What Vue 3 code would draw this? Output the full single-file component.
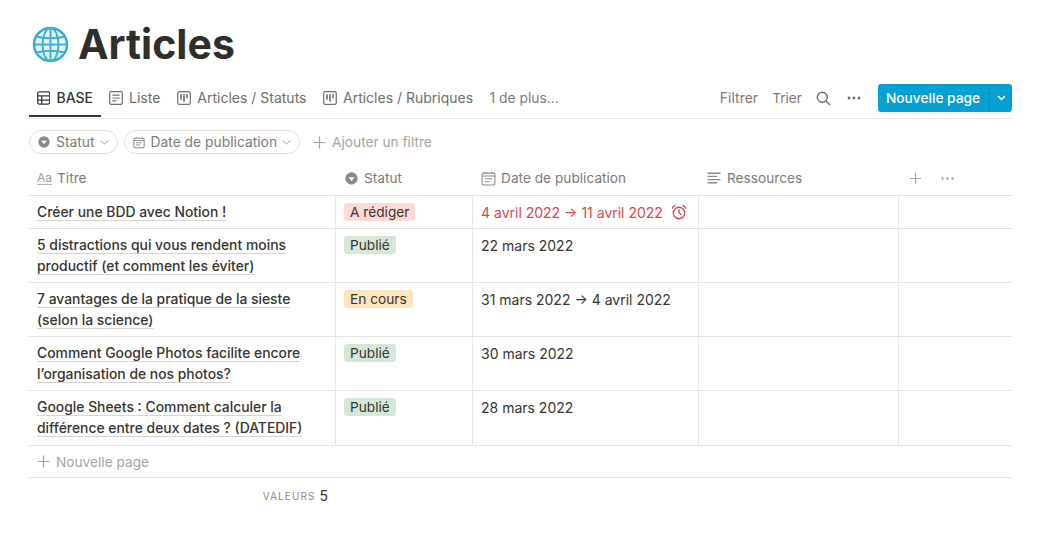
<script setup>
const rows = [
  { lines: ['Créer une BDD avec Notion !'], status: 'A rédiger', tone: 'red', date: '4 avril 2022 → 11 avril 2022', late: true },
  { lines: ['5 distractions qui vous rendent moins', 'productif (et comment les éviter)'], status: 'Publié', tone: 'green', date: '22 mars 2022' },
  { lines: ['7 avantages de la pratique de la sieste', '(selon la science)'], status: 'En cours', tone: 'yellow', date: '31 mars 2022 → 4 avril 2022' },
  { lines: ['Comment Google Photos facilite encore', 'l’organisation de nos photos?'], status: 'Publié', tone: 'green', date: '30 mars 2022' },
  { lines: ['Google Sheets : Comment calculer la', 'différence entre deux dates ? (DATEDIF)'], status: 'Publié', tone: 'green', date: '28 mars 2022' },
]
</script>

<template>
  <div class="page">
    <h1 class="title">
      <svg class="globe" width="37" height="37" viewBox="0 0 37 37" fill="none">
        <circle cx="18.5" cy="18.5" r="16.5" fill="#e6f4f9" stroke="#35a9d3" stroke-width="2.4" />
        <g stroke="#3fb0d8" stroke-width="2">
          <ellipse cx="18.5" cy="18.5" rx="8" ry="16.5" />
          <path d="M18.5 2v33M2 18.5h33M4.5 10.5c8 2.4 20 2.4 28 0M4.5 26.5c8-2.4 20-2.4 28 0" />
        </g>
      </svg>
      <span>Articles</span>
    </h1>

    <div class="tabs">
      <div class="tab active">
        <svg width="14" height="14" viewBox="0 0 14 14" fill="none" stroke="#37352f" stroke-width="1.3">
          <rect x=".7" y=".7" width="12.6" height="12.6" rx="1.8" />
          <path d="M.7 4.9h12.6M.7 9.1h12.6M4.9 4.9v8.4" />
        </svg>
        <span>BASE</span>
      </div>
      <div class="tab">
        <svg width="14" height="14" viewBox="0 0 14 14" fill="none" stroke="#6f6e69" stroke-width="1.2">
          <rect x=".7" y=".7" width="12.6" height="12.6" rx="1.6" />
          <path d="M3.4 4.2h7.2M3.4 7h7.2M3.4 9.8h4" />
        </svg>
        <span>Liste</span>
      </div>
      <div class="tab">
        <svg width="14" height="14" viewBox="0 0 14 14" fill="none" stroke="#6f6e69" stroke-width="1.2">
          <rect x=".7" y=".7" width="12.6" height="12.6" rx="1.6" />
          <path d="M4 3.2v5.6M7 3.2v7.6M10 3.2v4" stroke-width="1.6" />
        </svg>
        <span>Articles / Statuts</span>
      </div>
      <div class="tab">
        <svg width="14" height="14" viewBox="0 0 14 14" fill="none" stroke="#6f6e69" stroke-width="1.2">
          <rect x=".7" y=".7" width="12.6" height="12.6" rx="1.6" />
          <path d="M4 3.2v5.6M7 3.2v7.6M10 3.2v4" stroke-width="1.6" />
        </svg>
        <span>Articles / Rubriques</span>
      </div>
      <div class="tab more">1 de plus...</div>

      <div class="actions">
        <span class="action filter">Filtrer</span>
        <span class="action">Trier</span>
        <svg class="search" width="15" height="15" viewBox="0 0 15 15" fill="none" stroke="#6f6e69" stroke-width="1.4">
          <circle cx="6.3" cy="6.3" r="5" />
          <path d="M10 10l4 4" />
        </svg>
        <svg class="dots" width="14" height="4" viewBox="0 0 14 4" fill="#6f6e69">
          <circle cx="2" cy="2" r="1.4" /><circle cx="7" cy="2" r="1.4" /><circle cx="12" cy="2" r="1.4" />
        </svg>
        <div class="new">
          <span class="new-label">Nouvelle page</span>
          <span class="new-arrow">
            <svg width="9" height="6" viewBox="0 0 9 6" fill="none" stroke="#fff" stroke-width="1.5"><path d="M1 1l3.5 3.5L8 1" /></svg>
          </span>
        </div>
      </div>
    </div>

    <div class="filters">
      <div class="pill">
        <svg width="12" height="12" viewBox="0 0 14 14"><circle cx="7" cy="7" r="6.6" fill="#8b8a86" /><path d="M3.8 5.6h6.4L7 9.6z" fill="#fff" /></svg>
        <span>Statut</span>
        <svg class="caret" width="9" height="5" viewBox="0 0 9 5" fill="none" stroke="#a5a4a0" stroke-width="1"><path d="M.6.7L4.5 4 8.4.7" /></svg>
      </div>
      <div class="pill">
        <svg width="12" height="13" viewBox="0 0 14 14" fill="none" stroke="#8b8a86" stroke-width="1.2">
          <rect x="1" y="2" width="12" height="11" rx="1.4" />
          <path d="M1 4.6h12M3.6.8v1.6M10.4.8v1.6M3.6 7.2h6.8M3.6 10h4.4" />
        </svg>
        <span>Date de publication</span>
        <svg class="caret" width="9" height="5" viewBox="0 0 9 5" fill="none" stroke="#a5a4a0" stroke-width="1"><path d="M.6.7L4.5 4 8.4.7" /></svg>
      </div>
      <div class="add-filter">
        <svg width="13" height="13" viewBox="0 0 13 13" stroke="#a5a4a0" stroke-width="1.2"><path d="M6.5.5v12M.5 6.5h12" /></svg>
        <span>Ajouter un filtre</span>
      </div>
    </div>

    <div class="table">
      <div class="head row-grid">
        <div class="hcell">
          <span class="aa">Aa</span>
          <span>Titre</span>
        </div>
        <div class="hcell">
          <svg class="status-icon" width="13" height="13" viewBox="0 0 14 14"><circle cx="7" cy="7" r="6.6" fill="#8b8a86" /><path d="M3.8 5.6h6.4L7 9.6z" fill="#fff" /></svg>
          <span>Statut</span>
        </div>
        <div class="hcell">
          <svg width="15" height="15" viewBox="0 0 14 14" fill="none" stroke="#8b8a86" stroke-width="1">
            <rect x="1" y="2" width="12" height="11" rx="1.4" />
            <path d="M1 4.6h12M3.6.8v1.6M10.4.8v1.6M3.6 7.2h6.8M3.6 10h4.4" />
          </svg>
          <span class="date-label">Date de publication</span>
        </div>
        <div class="hcell">
          <svg width="14" height="12" viewBox="0 0 14 12" stroke="#8b8a86" stroke-width="1.4"><path d="M.5 1.2h13M.5 4.4h9.5M.5 7.6h13M.5 10.8h9.5" /></svg>
          <span>Ressources</span>
        </div>
        <div class="hcell tools">
          <svg width="11" height="11" viewBox="0 0 11 11" stroke="#a5a4a0" stroke-width="1.1"><path d="M5.5 0v11M0 5.5h11" /></svg>
          <svg width="13" height="3" viewBox="0 0 13 3" fill="#a5a4a0"><circle cx="1.5" cy="1.5" r="1.2" /><circle cx="6.5" cy="1.5" r="1.2" /><circle cx="11.5" cy="1.5" r="1.2" /></svg>
        </div>
      </div>

      <div v-for="(row, i) in rows" :key="i" class="row row-grid">
        <div class="cell name">
          <span v-for="line in row.lines" :key="line" class="line"><span class="u">{{ line }}</span></span>
        </div>
        <div class="cell status"><span class="tag" :class="row.tone">{{ row.status }}</span></div>
        <div class="cell date" :class="{ late: row.late }">
          <span>{{ row.date }}</span>
          <svg v-if="row.late" width="16" height="16" viewBox="0 0 16 16" fill="none" stroke="#dc4450" stroke-width="1.4">
            <circle cx="8" cy="9" r="5.7" />
            <path d="M8 5.6V9l2.4 1.6M1.2 4.6C1.6 3 2.8 1.8 4.4 1.4M14.8 4.6C14.4 3 13.2 1.8 11.6 1.4" />
          </svg>
        </div>
        <div class="cell"></div>
        <div class="cell last"></div>
      </div>
    </div>

    <div class="new-row">
      <svg width="13" height="13" viewBox="0 0 13 13" stroke="#a5a4a0" stroke-width="1.2"><path d="M6.5.5v12M.5 6.5h12" /></svg>
      <span>Nouvelle page</span>
    </div>

    <div class="footer">
      <span class="count-label">VALEURS</span>
      <span class="count">5</span>
    </div>
  </div>
</template>

<style>
html, body { background: #fff; }
</style>

<style scoped>
.page {
  width: 983px;
  margin-left: 29px;
  font-family: Inter, "Liberation Sans", sans-serif;
  color: #37352f;
  font-size: 13.7px;
}
.title {
  display: flex;
  align-items: center;
  gap: 9px;
  margin: 0;
  height: 84px;
  padding: 4px 0 0 3px;
  box-sizing: border-box;
  font-size: 41px;
  line-height: 48px;
  font-weight: 700;
  color: #2f2e2b;
}
.tabs {
  display: flex;
  align-items: flex-start;
  height: 34px;
  border-bottom: 1px solid #e3e2e0;
}
.tab {
  display: flex;
  align-items: center;
  gap: 6px;
  height: 28px;
  line-height: 28px;
  padding: 0 8px;
  color: #6f6e69;
  font-size: 14px;
  white-space: nowrap;
}
.tab:nth-child(2) { padding-right: 9px; }
.tab:nth-child(3) { padding-right: 8.5px; }
.tab:nth-child(4) { padding-right: 8.5px; }
.tab.active {
  color: #37352f;
  font-weight: 500;
  height: 33px;
  width: 72px;
  box-sizing: border-box;
  align-items: flex-start;
  border-bottom: 2px solid #37352f;
}
.tab.active svg { margin-top: 7px; }
.tab.more { color: #7d7c78; font-size: 13.8px; }
.actions {
  margin-left: auto;
  display: flex;
  align-items: center;
  height: 28px;
  line-height: 28px;
}
.action { color: #7d7c78; }
.filter { margin-right: 14px; font-size: 14px; }
.search { margin-left: 14px; }
.dots { margin-left: 16px; }
.new {
  display: flex;
  align-items: stretch;
  height: 28px;
  margin-left: 17px;
  background: #06a0d4;
  border-radius: 3px;
  color: #fff;
  font-weight: 500;
}
.new-label {
  display: flex;
  align-items: center;
  width: 111px;
  box-sizing: border-box;
  padding: 0 8px;
  white-space: nowrap;
}
.new-arrow {
  display: flex;
  align-items: center;
  justify-content: center;
  width: 23px;
  box-sizing: border-box;
  border-left: 1px solid #0b8fbd;
}
.filters {
  display: flex;
  align-items: center;
  gap: 6px;
  height: 42px;
  padding-top: 4px;
  box-sizing: border-box;
}
.pill {
  display: flex;
  align-items: center;
  gap: 6px;
  height: 24px;
  padding: 0 8px;
  box-sizing: border-box;
  border: 1px solid #e0dfdc;
  border-radius: 12px;
  font-size: 13.85px;
  color: #7d7c78;
}
.caret { margin-left: -1px; }
.add-filter {
  display: flex;
  align-items: center;
  gap: 6px;
  margin-left: 7px;
  color: #a5a4a0;
}
.row-grid {
  display: grid;
  grid-template-columns: 307px 137px 226px 200px 113px;
}
.head {
  height: 35px;
  box-sizing: border-box;
  border-bottom: 1px solid #e3e2e0;
}
.hcell {
  display: flex;
  align-items: center;
  gap: 6px;
  padding: 0 8px;
  color: #7d7c78;
}
.aa {
  font-size: 12px;
  line-height: 13px;
  margin-right: -1px;
  color: #9b9a97;
  border-bottom: 1px solid #b5b4b0;
}
.status-icon { margin-left: 1px; }
.date-label { margin-left: -1px; }
.tools {
  gap: 20px;
  padding-left: 11px;
}
.row { border-bottom: 1px solid #e3e2e0; }
.cell {
  padding: 6px 8px 5px;
  border-right: 1px solid #e9e8e6;
  line-height: 21px;
  min-height: 21px;
}
.row:nth-child(2) .cell { padding-bottom: 4px; }
.row:last-child .name { padding-bottom: 6px; }
.cell.last { border-right: 0; }
.name {
  font-weight: 500;
  font-size: 13.9px;
  white-space: nowrap;
}
.line { display: block; height: 21px; }
.u {
  text-decoration: underline;
  text-decoration-color: #d5d4d1;
  text-decoration-thickness: 1px;
  text-underline-offset: 3px;
  text-decoration-skip-ink: none;
}
.status { padding-top: 7px; }
.tag {
  display: block;
  width: max-content;
  height: 18px;
  line-height: 18px;
  padding: 0 6px;
  border-radius: 3px;
  color: #37352f;
}
.red { background: #ffd9d5; }
.green { background: #d5e8d8; }
.yellow { background: #fde4bd; }
.date {
  display: flex;
  align-items: flex-start;
  gap: 6px;
  font-size: 14px;
  white-space: nowrap;
}
.date svg { margin-top: 2px; margin-left: 2px; }
.late { color: #dc4450; }
.new-row {
  display: flex;
  align-items: center;
  gap: 6px;
  height: 31px;
  padding-left: 8px;
  border-bottom: 1px solid #e3e2e0;
  color: #a5a4a0;
}
.footer {
  display: flex;
  align-items: center;
  justify-content: flex-end;
  width: 299px;
  height: 35px;
  gap: 4px;
}
.count-label {
  font-size: 10px;
  letter-spacing: 1.1px;
  color: #8b8a86;
}
.count { font-size: 14px; color: #37352f; }
</style>
